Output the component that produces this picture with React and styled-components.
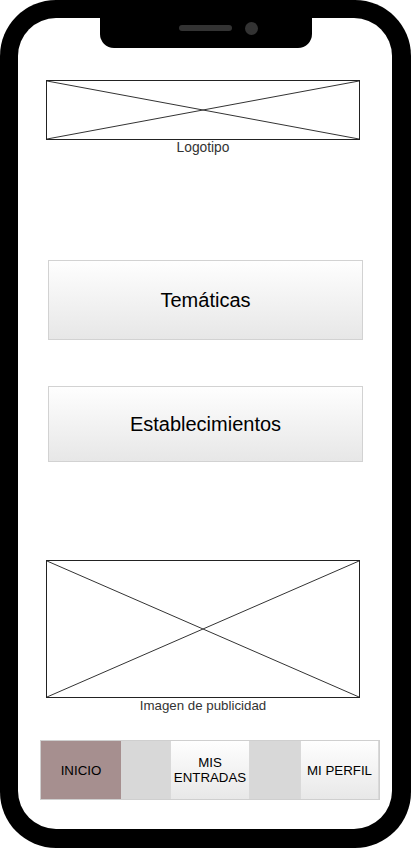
import React from "react";
import styled, { createGlobalStyle } from "styled-components";

const Global = createGlobalStyle`
  html, body { margin: 0; padding: 0; background: #fff; }
  body { font-family: "Liberation Sans", Arial, sans-serif; }
  * { box-sizing: border-box; }
`;

const Phone = styled.div`
  width: 411px;
  height: 848px;
  background: #000;
  border-radius: 56px;
  padding: 18px 19px 19px 18px;
  display: flex;
`;

const Screen = styled.div`
  flex: 1;
  background: #fff;
  border-radius: 38px;
  display: flex;
  flex-direction: column;
  align-items: flex-start;
`;

const Notch = styled.div`
  margin-left: 82px;
  width: 212px;
  height: 30px;
  background: #000;
  border-radius: 0 0 14px 14px;
  display: flex;
  align-items: flex-start;
  justify-content: flex-start;
  gap: 13px;
  padding-top: 4px;
  padding-left: 79px;
`;

const Speaker = styled.div`
  width: 53px;
  height: 6px;
  margin-top: 3px;
  border-radius: 3px;
  background: #333;
`;

const Camera = styled.div`
  width: 13px;
  height: 13px;
  border-radius: 50%;
  background: #333;
`;

const Placeholder = styled.div`
  margin-left: ${(p) => p.$left}px;
  margin-top: ${(p) => p.$top}px;
  width: ${(p) => p.$w}px;
  display: flex;
  flex-direction: column;
  align-items: center;
`;

const CrossBox = styled.div`
  width: 100%;
  height: ${(p) => p.$h}px;
  border: 1px solid #222;
  svg { display: block; width: 100%; height: 100%; }
`;

const Caption = styled.div`
  font-size: ${(p) => p.$size}px;
  line-height: 16px;
  color: #333;
`;

const BigButton = styled.div`
  margin-left: 30px;
  margin-top: ${(p) => p.$top}px;
  width: 315px;
  height: ${(p) => p.$h}px;
  border: 1px solid #d2d2d2;
  background: linear-gradient(#fefefe, #e7e7e7);
  display: flex;
  align-items: center;
  justify-content: center;
  font-size: 20px;
  color: #000;
`;

const Nav = styled.div`
  margin-left: 22px;
  margin-top: 26px;
  width: 340px;
  height: 60px;
  display: grid;
  grid-template-columns: 80px 49px 80px 50px 79px;
  border: 1px solid #cfcfcf;
  background: #d8d8d8;
`;

const NavItem = styled.div`
  display: flex;
  align-items: center;
  justify-content: center;
  text-align: center;
  font-size: 13.3px;
  line-height: 15px;
  color: #000;
  background: ${(p) =>
    p.$active ? "#a68f8f" : p.$spacer ? "#d8d8d8" : "linear-gradient(#fefefe, #e8e8e8)"};
  border-left: ${(p) => (p.$spacer || p.$active ? "none" : "1px solid #d9d9d9")};
  border-right: ${(p) => (p.$spacer || p.$active ? "none" : "1px solid #d9d9d9")};
`;

const Cross = () => (
  <svg viewBox="0 0 100 100" preserveAspectRatio="none">
    <line x1="0" y1="0" x2="100" y2="100" stroke="#333" strokeWidth="1" vectorEffect="non-scaling-stroke" />
    <line x1="100" y1="0" x2="0" y2="100" stroke="#333" strokeWidth="1" vectorEffect="non-scaling-stroke" />
  </svg>
);

export default function App() {
  return (
    <>
      <Global />
      <Phone>
        <Screen>
          <Notch>
            <Speaker />
            <Camera />
          </Notch>
          <Placeholder $left={28} $top={32} $w={314}>
            <CrossBox $h={60}>
              <Cross />
            </CrossBox>
            <Caption $size={13.8}>Logotipo</Caption>
          </Placeholder>
          <BigButton $top={104} $h={80}>Temáticas</BigButton>
          <BigButton $top={46} $h={76}>Establecimientos</BigButton>
          <Placeholder $left={28} $top={98} $w={314}>
            <CrossBox $h={138}>
              <Cross />
            </CrossBox>
            <Caption $size={13.3}>Imagen de publicidad</Caption>
          </Placeholder>
          <Nav>
            <NavItem $active>INICIO</NavItem>
            <NavItem $spacer />
            <NavItem>MIS<br />ENTRADAS</NavItem>
            <NavItem $spacer />
            <NavItem>MI PERFIL</NavItem>
          </Nav>
        </Screen>
      </Phone>
    </>
  );
}
